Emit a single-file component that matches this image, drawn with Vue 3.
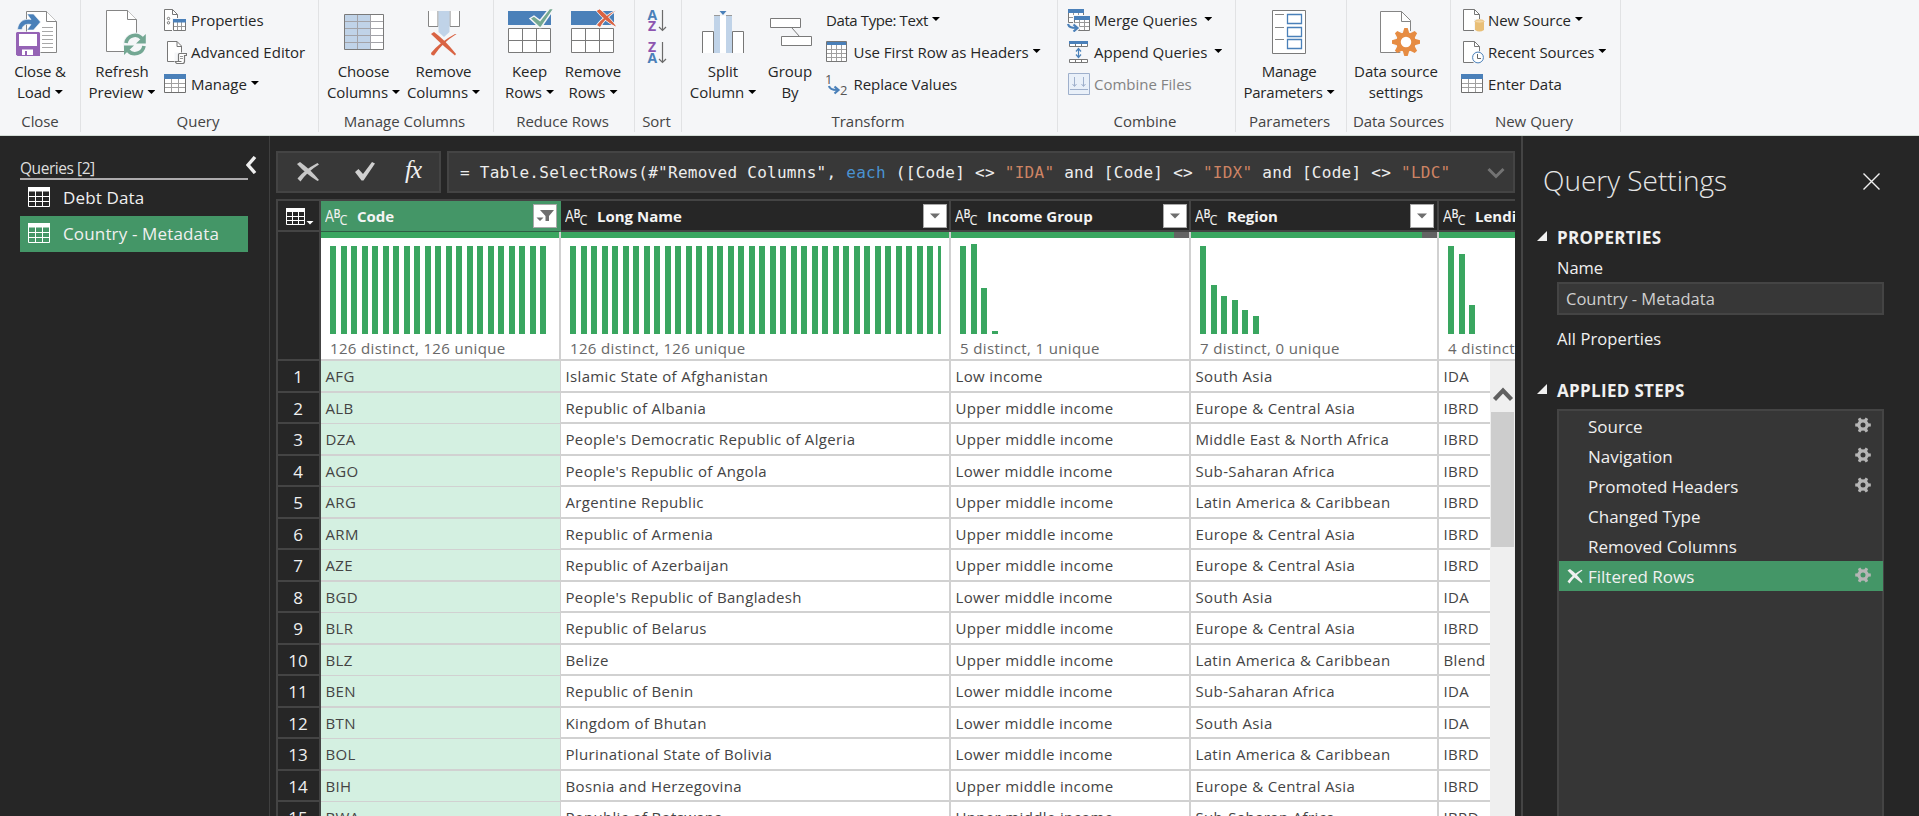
<script setup>
const queries = [
  { name: 'Debt Data', active: false },
  { name: 'Country - Metadata', active: true },
]

const formula = [
  { t: '= Table.SelectRows(#"Removed Columns", ' },
  { t: 'each', k: 'kw' },
  { t: ' ([Code] <> ' },
  { t: '"IDA"', k: 'str' },
  { t: ' and [Code] <> ' },
  { t: '"IDX"', k: 'str' },
  { t: ' and [Code] <> ' },
  { t: '"LDC"', k: 'str' },
]

const columns = [
  { key: 'code', title: 'Code', bars: Array(21).fill(88), note: '126 distinct, 126 unique', filtered: true },
  { key: 'name', title: 'Long Name', bars: Array(36).fill(88), note: '126 distinct, 126 unique' },
  { key: 'income', title: 'Income Group', bars: [88, 90, 46, 3], note: '5 distinct, 1 unique', empty: true },
  { key: 'region', title: 'Region', bars: [88, 49, 38, 34, 24, 18], note: '7 distinct, 0 unique', empty: true },
  { key: 'lending', title: 'Lending category', bars: [88, 80, 29], note: '4 distinct, 0 unique' },
]

const U = 'Upper middle income'
const L = 'Lower middle income'
const ECA = 'Europe & Central Asia'
const LAC = 'Latin America & Caribbean'
const SSA = 'Sub-Saharan Africa'
const rows = [
  ['AFG', 'Islamic State of Afghanistan', 'Low income', 'South Asia', 'IDA'],
  ['ALB', 'Republic of Albania', U, ECA, 'IBRD'],
  ['DZA', "People's Democratic Republic of Algeria", U, 'Middle East & North Africa', 'IBRD'],
  ['AGO', "People's Republic of Angola", L, SSA, 'IBRD'],
  ['ARG', 'Argentine Republic', U, LAC, 'IBRD'],
  ['ARM', 'Republic of Armenia', U, ECA, 'IBRD'],
  ['AZE', 'Republic of Azerbaijan', U, ECA, 'IBRD'],
  ['BGD', "People's Republic of Bangladesh", L, 'South Asia', 'IDA'],
  ['BLR', 'Republic of Belarus', U, ECA, 'IBRD'],
  ['BLZ', 'Belize', U, LAC, 'Blend'],
  ['BEN', 'Republic of Benin', L, SSA, 'IDA'],
  ['BTN', 'Kingdom of Bhutan', L, 'South Asia', 'IDA'],
  ['BOL', 'Plurinational State of Bolivia', L, LAC, 'IBRD'],
  ['BIH', 'Bosnia and Herzegovina', U, ECA, 'IBRD'],
  ['BWA', 'Republic of Botswana', U, SSA, 'IBRD'],
]

const steps = [
  { name: 'Source', gear: true },
  { name: 'Navigation', gear: true },
  { name: 'Promoted Headers', gear: true },
  { name: 'Changed Type' },
  { name: 'Removed Columns' },
  { name: 'Filtered Rows', gear: true, active: true },
]

const teeth = [0, 45, 90, 135, 180, 225, 270, 315]
const smallTeeth = [30, 90, 150, 210, 270, 330]
</script>

<template>
  <div class="app">
    <header class="ribbon">
      <section class="group g-close">
        <div class="body">
          <div class="big">
            <svg width="50" height="50" viewBox="15 8 50 50">
              <path d="M26.5 11.5H46.5L56.5 21.5V52.5H26.5Z" fill="#fff" stroke="#858585" />
              <path d="M46.5 11.5V21.5H56.5" fill="#fff" stroke="#858585" />
              <path d="M42 27.5H53M42 31.5H53M42 35.5H53M42 39.5H53M42 43.5H53M42 47.5H53" stroke="#a8a8a8" />
              <path d="M17.5 29.5C18.500 21.500 23.500 18.500 31 19.500L27 14H33.500L40.500 22L33.500 30H27L31 24.500C25.500 23.500 22.500 25.500 22 29.500Z" fill="#4a80b9" stroke="#f5f6f8" stroke-width=".6" />
              <path d="M17 31.500H39L40.500 33V56.500H17L15.500 55V31.500Z" fill="#f5f6f8" />
              <path d="M17 32H39L40 33V56H17.500L16 54.500V33Z" fill="#9563b5" />
              <path d="M19 34H37V46H19Z" fill="#fff" />
              <path d="M22 49.500H33V55H27V51H25V55H22Z" fill="#fff" />
            </svg>
            <span>Close &amp;</span><span>Load<i class="caret"></i></span>
          </div>
        </div>
        <div class="label">Close</div>
      </section>

      <section class="group g-query">
        <div class="body">
          <div class="big">
            <svg width="50" height="50" viewBox="97 8 50 50">
              <path d="M106.500 10.500H127.500L136.500 19.500V51.500H106.500Z" fill="#fff" stroke="#858585" />
              <path d="M127.500 10.500V19.500H136.500" fill="#fff" stroke="#858585" />
              <circle cx="135" cy="44.500" r="12" fill="#f5f6f8" />
              <g fill="none" stroke="#73a793" stroke-width="3.600">
                <path d="M126 43A9.200 9.200 0 0 1 142 38.500" />
                <path d="M144 46A9.200 9.200 0 0 1 128 50.500" />
              </g>
              <path d="M145.800 34V43.500H136Z M124 55V45.500H134Z" fill="#73a793" />
            </svg>
            <span>Refresh</span><span>Preview<i class="caret"></i></span>
          </div>
          <div class="stack">
            <div class="small">
              <svg width="24" height="24" viewBox="163 8 24 24">
                <path d="M164.500 9.500H172.500L177.500 14.500V30.500H164.500Z" fill="#fff" stroke="#777" />
                <path d="M172.500 9.500V14.500H177.500" fill="none" stroke="#777" />
                <path d="M172 18H187V32H172Z" fill="#f5f6f8" />
                <path d="M173.500 19.500H185.500V30.500H173.500Z" fill="#fff" stroke="#777" />
                <path d="M177.500 21V30M181.500 21V30M174 26.500H185" stroke="#999" />
                <path d="M173 19H186V22.500H173Z" fill="#4a80b9" />
                <circle cx="168.500" cy="18.500" r="1.200" fill="none" stroke="#777" />
                <circle cx="168.500" cy="22.800" r="1.200" fill="none" stroke="#777" />
              </svg>Properties
            </div>
            <div class="small">
              <svg width="24" height="24" viewBox="163 40 24 24">
                <path d="M167.500 41.500H177L181.500 46V61.500H167.500Z" fill="#fff" stroke="#777" />
                <path d="M177 41.500V46.500H181.500" fill="none" stroke="#777" />
                <path d="M174.500 52.500H187V64H174.500Z" fill="#f5f6f8" />
                <path d="M178.500 61V54.500Q178.500 53.500 179.500 53.500H186.500V55.500H184.500V61.500Q184.500 63.500 182.500 63.500H177Q175.500 63 175.500 61.500H181.500" fill="#fff" stroke="#777" stroke-width="1.200" />
                <path d="M180 56.500H183M180 58.500H183" stroke="#999" />
              </svg>Advanced Editor
            </div>
            <div class="small">
              <svg width="24" height="24" viewBox="163 72 24 24">
                <path d="M164.500 75.500H185.500V92.500H164.500Z" fill="#fff" stroke="#6f6f6f" />
                <path d="M171.500 79V92M178.500 79V92M165 83.500H185M165 87.500H185" stroke="#a0a0a0" />
                <path d="M164 74H186V79H164Z" fill="#4a80b9" />
              </svg>Manage<i class="caret"></i>
            </div>
          </div>
        </div>
        <div class="label">Query</div>
      </section>

      <section class="group g-cols">
        <div class="body">
          <div class="big">
            <svg width="50" height="50" viewBox="339 8 50 50">
              <path d="M344.500 14.500H383.500V49.500H344.500Z" fill="#fff" />
              <path d="M345 15H370V49H345Z" fill="#c0d3e8" />
              <path d="M357.500 15V49M370.500 15V49M345 21.500H383M345 28.500H383M345 35.500H383M345 42.500H383" stroke="#a3a3a8" />
              <path d="M344.500 14.500H383.500V49.500H344.500Z" fill="none" stroke="#7a7a7a" />
            </svg>
            <span>Choose</span><span>Columns<i class="caret"></i></span>
          </div>
          <div class="big">
            <svg width="50" height="50" viewBox="419 8 50 50">
              <path d="M428.500 11V26.500H438V11M450 11V26.500H459.500V11" fill="#fff" stroke="#858585" />
              <path d="M438.500 11H449.500V32L444 37L438.500 32Z" fill="#c0d3e8" />
              <path d="M431 34L434 32Q445 40 456 54L455 55.500Q443 46 431 34Z" fill="#d96343" />
              <path d="M456.500 34L455 34Q440 42 431 53Q431 55.500 434 55.500Q442 43 456.500 34Z" fill="#d96343" />
            </svg>
            <span>Remove</span><span>Columns<i class="caret"></i></span>
          </div>
        </div>
        <div class="label">Manage Columns</div>
      </section>

      <section class="group g-rows">
        <div class="body">
          <div class="big">
            <svg width="50" height="50" viewBox="505 8 50 50">
              <path d="M508 11H551V25H508Z" fill="#4a80b9" />
              <path d="M508.500 28.500H550.500V52.500H508.500ZM522.500 28V52M536.500 28V52M508 40.500H551" fill="#fff" stroke="#7a7a7a" />
              <path d="M530 18.500L534 16L540 20.500L549.500 8.500H554L541 27.500H539.500Z" fill="#74a890" stroke="#f5f6f8" stroke-width="1.400" />
            </svg>
            <span>Keep</span><span>Rows<i class="caret"></i></span>
          </div>
          <div class="big">
            <svg width="50" height="50" viewBox="568 8 50 50">
              <path d="M571 11H614V25H571Z" fill="#4a80b9" />
              <path d="M571.500 28.500H613.500V52.500H571.500ZM585.500 28V52M599.500 28V52M571 40.500H614" fill="#fff" stroke="#7a7a7a" />
              <g fill="#d96343" stroke="#f5f6f8" stroke-width="1.600" paint-order="stroke">
                <path d="M597 11L599.500 9.500Q608 16 616 26.500Q605 21 597 11Z" />
                <path d="M616 10.500Q603 17 597 25L600 27Q605 18 616 10.500Z" />
              </g>
              <path d="M597 11L599.500 9.500Q608 16 616 26.500Q605 21 597 11Z" fill="#d96343" />
            </svg>
            <span>Remove</span><span>Rows<i class="caret"></i></span>
          </div>
        </div>
        <div class="label">Reduce Rows</div>
      </section>

      <section class="group g-sort">
        <div class="body">
          <svg class="sort" width="46" height="60" viewBox="635 6 46 60">
            <g class="az">
              <text x="647.500" y="20">A</text>
              <text x="648" y="31" class="z">Z</text>
              <text x="648" y="51.500" class="z">Z</text>
              <text x="647.500" y="63">A</text>
            </g>
            <path d="M662.500 10V30M659 27L662.500 30.500L666 27M662.500 42V62M659 59L662.500 62.500L666 59" fill="none" stroke="#6b6b6b" stroke-width="1.200" />
          </svg>
        </div>
        <div class="label">Sort</div>
      </section>

      <section class="group g-transform">
        <div class="body">
          <div class="big">
            <svg width="50" height="50" viewBox="698 8 50 50">
              <path d="M702.500 53V31.500H713.500V53M732.500 53V31.500H743.500V53" fill="#fff" stroke="#777" />
              <path d="M720 16H726V53H720Z" fill="#fff" />
              <path d="M714 15H720V53H714ZM726 15H732V53H726Z" fill="#c0d3e8" />
              <path d="M714 15.500H720M726 15.500H732" stroke="#999" />
              <path d="M719.500 11H726.500L723 15Z" fill="#4a80b9" />
            </svg>
            <span>Split</span><span>Column<i class="caret"></i></span>
          </div>
          <div class="big">
            <svg width="50" height="50" viewBox="765 8 50 50">
              <path d="M770.500 18.500H800.500V27.500H770.500ZM781.500 36.500H811.500V45.500H781.500Z" fill="#fff" stroke="#7a7a7a" />
              <path d="M792 28L799.500 36.500" stroke="#7a7a7a" />
            </svg>
            <span>Group</span><span>By</span>
          </div>
          <div class="stack">
            <div class="small dtype">Data Type: Text<i class="caret"></i></div>
            <div class="small">
              <svg width="22" height="24" viewBox="827 40 22 24">
                <path d="M827.500 41.500H847.500V61.500H827.500Z" fill="#fff" stroke="#777" />
                <path d="M832.500 42V61M837.500 42V61M842.500 42V61M828 49.500H847M828 53.500H847M828 57.500H847" stroke="#a0a0a0" />
                <path d="M828 42H847V45H828Z" fill="#4a80b9" />
              </svg>Use First Row as Headers<i class="caret"></i>
            </div>
            <div class="small">
              <svg width="22" height="24" viewBox="827 72 22 24">
                <text class="digit" x="826" y="84">1</text>
                <text class="digit" x="841" y="95">2</text>
                <path d="M830 86Q831 90 838 90M835.500 86.500L839.500 90L835.500 93.500" fill="none" stroke="#4a80b9" stroke-width="2.200" />
              </svg>Replace Values
            </div>
          </div>
        </div>
        <div class="label">Transform</div>
      </section>

      <section class="group g-combine">
        <div class="body">
          <div class="stack">
            <div class="small">
              <svg width="24" height="24" viewBox="1067 8 24 24">
                <path d="M1068.500 9.500H1083.500V22.500H1068.500Z" fill="#fff" stroke="#777" />
                <path d="M1073.500 13V22M1078.500 13V22M1069 17.500H1083" stroke="#999" />
                <path d="M1068 9H1084V13H1068Z" fill="#4a80b9" />
                <path d="M1073 15H1091V32H1073Z" fill="#f5f6f8" />
                <path d="M1074.500 16.500H1089.500V30.500H1074.500Z" fill="#fff" stroke="#777" />
                <path d="M1079.500 20V30M1084.500 20V30M1075 22.500H1089M1075 26.500H1089" stroke="#999" />
                <path d="M1074 16H1090V20H1074Z" fill="#4a80b9" />
                <path d="M1068 24Q1069 28 1076 28M1073.500 24L1078 28L1073.500 32" fill="none" stroke="#f5f6f8" stroke-width="4" />
                <path d="M1068 24Q1069 28 1076 28M1073.500 24.500L1077.500 28L1073.500 31.500" fill="none" stroke="#4a80b9" stroke-width="2.200" />
              </svg>Merge Queries<i class="caret wide"></i>
            </div>
            <div class="small">
              <svg width="24" height="24" viewBox="1067 40 24 24">
                <path d="M1069.500 43.500H1087.500V46.500H1069.500ZM1069.500 59.500H1087.500V62.500H1069.500ZM1075.500 43V46M1081.500 43V46M1075.500 59V63M1081.500 59V63" fill="#fff" stroke="#777" />
                <path d="M1069 41H1088V44H1069Z" fill="#4a80b9" />
                <path d="M1078.500 49V57M1076 51.500L1078.500 48.500L1081 51.500M1076 54.500L1078.500 57.500L1081 54.500" fill="none" stroke="#4a80b9" stroke-width="1.200" />
              </svg>Append Queries<i class="caret wide"></i>
            </div>
            <div class="small disabled">
              <svg width="24" height="24" viewBox="1067 72 24 24">
                <path d="M1068.500 73.500H1089.500V94.500H1068.500Z" fill="#e9f0f9" stroke="#9fb0cc" />
                <path d="M1070 89.500H1088M1074.500 77V86M1083.500 77V86M1072.500 84L1074.500 86.500L1076.500 84M1081.500 84L1083.500 86.500L1085.500 84" fill="none" stroke="#9fb0cc" />
              </svg>Combine Files
            </div>
          </div>
        </div>
        <div class="label">Combine</div>
      </section>

      <section class="group g-params">
        <div class="body">
          <div class="big">
            <svg width="50" height="50" viewBox="1264 8 50 50">
              <path d="M1272.500 10.500H1305.500V53.500H1272.500Z" fill="#fff" stroke="#7a7a7a" />
              <path d="M1287.500 14.500H1301.500V23.500H1287.500ZM1287.500 27.500H1301.500V36.500H1287.500ZM1287.500 39.500H1301.500V48.500H1287.500Z" fill="none" stroke="#4a80b9" stroke-width="1.300" />
              <path d="M1275 14.500H1284M1275 27.500H1284M1275 39.500H1284" stroke="#858585" />
            </svg>
            <span>Manage</span><span>Parameters<i class="caret"></i></span>
          </div>
        </div>
        <div class="label">Parameters</div>
      </section>

      <section class="group g-sources">
        <div class="body">
          <div class="big">
            <svg width="50" height="50" viewBox="1371 8 50 50">
              <path d="M1380.500 11.500H1401.500L1410.500 20.500V52.500H1380.500Z" fill="#fff" stroke="#858585" />
              <path d="M1401.500 11.500V21.500H1410.500" fill="none" stroke="#858585" />
              <circle cx="1406" cy="42" r="12" fill="#f5f6f8" />
              <g fill="#e68c43">
                <path v-for="a in teeth" :key="a" :transform="`rotate(${a} 1406 42)`" d="M1402.500 34L1404.300 28H1407.700L1409.500 34Z" />
              </g>
              <circle cx="1406" cy="42" r="7.500" fill="#fff" stroke="#e68c43" stroke-width="4.500" />
            </svg>
            <span>Data source</span><span>settings</span>
          </div>
        </div>
        <div class="label">Data Sources</div>
      </section>

      <section class="group g-new">
        <div class="body">
          <div class="stack">
            <div class="small">
              <svg width="24" height="24" viewBox="1461 8 24 24">
                <path d="M1463.500 9.500H1474.500L1479.500 14.500V30.500H1463.500Z" fill="#fff" stroke="#777" />
                <path d="M1474.500 9.500V14.500H1479.500" fill="none" stroke="#777" />
                <path d="M1474 19H1485V32H1474Z" fill="#f5f6f8" />
                <path d="M1475 21.500V30Q1479.500 33 1484 30V21.500Z" fill="#e9bf77" />
                <ellipse cx="1479.500" cy="21.500" rx="4.500" ry="1.700" fill="#f3d6a3" stroke="#e9bf77" />
              </svg>New Source<i class="caret"></i>
            </div>
            <div class="small">
              <svg width="24" height="24" viewBox="1461 40 24 24">
                <path d="M1463.500 41.500H1474.500L1479.500 46.500V62.500H1463.500Z" fill="#fff" stroke="#777" />
                <path d="M1474.500 41.500V46.500H1479.500" fill="none" stroke="#777" />
                <circle cx="1478" cy="57.500" r="6.600" fill="#f5f6f8" />
                <circle cx="1478" cy="57.500" r="5.400" fill="#fff" stroke="#4a80b9" />
                <path d="M1477.500 54V58.500H1481" fill="none" stroke="#666" />
              </svg>Recent Sources<i class="caret"></i>
            </div>
            <div class="small">
              <svg width="24" height="24" viewBox="1461 72 24 24">
                <path d="M1461.500 75.500H1482.500V92.500H1461.500Z" fill="#fff" stroke="#6f6f6f" />
                <path d="M1468.500 79V92M1475.500 79V92M1462 83.500H1482M1462 87.500H1482" stroke="#a0a0a0" />
                <path d="M1461 74H1483V79H1461Z" fill="#4a80b9" />
              </svg>Enter Data
            </div>
          </div>
        </div>
        <div class="label">New Query</div>
      </section>
    </header>

    <div class="workspace">
      <aside class="queries">
        <div class="q-head">
          <span>Queries [2]</span>
          <svg width="12" height="18" viewBox="0 0 12 18"><path d="M9 1L2 9L9 17" fill="none" stroke="#eee" stroke-width="3.400" /></svg>
        </div>
        <div v-for="q in queries" :key="q.name" class="q-item" :class="{ active: q.active }">
          <svg width="22" height="20" viewBox="0 0 22 20">
            <path d="M.5 .5H21.500V19.500H.5ZM7.500 4V19M14.500 4V19M1 9.500H21M1 14.500H21" fill="none" stroke="#fff" />
            <path d="M0 0H22V4.500H0Z" fill="#fff" />
          </svg>
          <span>{{ q.name }}</span>
        </div>
      </aside>

      <main class="editor">
        <div class="fbar">
          <div class="fbuttons">
            <svg width="24" height="22" viewBox="296 161 24 22">
              <path d="M297 164L300 162Q311 170 319 180L317.500 181Q306 174 297 164Z" fill="#c8c8c8" />
              <path d="M319 164.500L317.500 163Q304 170 297.500 178.500L300.500 181.500Q308 171 319 164.500Z" fill="#c8c8c8" />
            </svg>
            <svg width="24" height="22" viewBox="353 161 24 22">
              <path d="M355 172L358.500 169L363 174L372 162L375 163.500L363.500 180.500H361.500Z" fill="#d0d0d0" />
            </svg>
            <span class="fx">fx</span>
          </div>
          <div class="formula">
            <code><span v-for="(p, i) in formula" :key="i" :class="p.k">{{ p.t }}</span></code>
            <svg width="18" height="13" viewBox="0 0 18 13"><path d="M1.500 2L9 9.500L16.500 2" fill="none" stroke="#737373" stroke-width="3" /></svg>
          </div>
        </div>

        <div class="grid">
          <div class="gutter">
            <div class="corner">
              <svg width="28" height="18" viewBox="0 0 28 18">
                <path d="M.5 .5H18.500V16.500H.5ZM6.500 4V16M12.500 4V16M1 8.500H18M1 12.500H18" fill="none" stroke="#fff" />
                <path d="M0 0H19V4H0Z" fill="#fff" />
                <path d="M20.500 13H27.500L24 16.500Z" fill="#fff" />
              </svg>
            </div>
            <div class="gspace"></div>
            <div v-for="(r, i) in rows" :key="i" class="gnum">{{ i + 1 }}</div>
          </div>

          <div v-for="(c, ci) in columns" :key="c.key" class="col" :class="[c.key, { filtered: c.filtered }]">
            <div class="chead">
              <svg class="abc" width="24" height="22" viewBox="0 0 24 22">
                <text x="0" y="14.500" font-size="16.500" textLength="9" lengthAdjust="spacingAndGlyphs">A</text>
                <text x="8.500" y="11" font-size="13" font-weight="600" textLength="7" lengthAdjust="spacingAndGlyphs">B</text>
                <text x="14.500" y="18" font-size="14.500" textLength="8" lengthAdjust="spacingAndGlyphs">C</text>
              </svg>
              <span class="title">{{ c.title }}</span>
              <span class="drop">
                <svg v-if="c.filtered" width="22" height="22" viewBox="0 0 22 22">
                  <path d="M6 5H20L15 11V16H11.500V11ZM2.500 12.500H9.500L6 16Z" fill="#6e6e6e" />
                </svg>
                <svg v-else width="22" height="22" viewBox="0 0 22 22"><path d="M6 8.500H16L11 13.500Z" fill="#6e6e6e" /></svg>
              </span>
            </div>
            <div class="quality"><i v-if="c.empty"></i></div>
            <div class="dist">
              <div class="bars">
                <i v-for="(h, bi) in c.bars" :key="bi" :style="{ height: h + 'px' }"></i>
              </div>
              <p>{{ c.note }}</p>
            </div>
            <div v-for="(r, i) in rows" :key="i" class="cell">{{ r[ci] }}</div>
          </div>

          <div class="scroll">
            <svg width="25" height="51" viewBox="0 0 25 51"><path d="M4.500 38.500L13 29.500L21.500 38.500" fill="none" stroke="#606060" stroke-width="4.200" /></svg>
            <div class="thumb"></div>
          </div>
        </div>
      </main>

      <aside class="settings">
        <div class="s-head">
          <h1>Query Settings</h1>
          <svg width="17" height="17" viewBox="0 0 17 17"><path d="M.5 .5L16.500 16.500M16.500 .5L.5 16.500" stroke="#f0f0f0" stroke-width="1.400" /></svg>
        </div>
        <h2 class="props"><i></i>PROPERTIES</h2>
        <div class="field">Name</div>
        <div class="input">Country - Metadata</div>
        <div class="all">All Properties</div>
        <h2><i></i>APPLIED STEPS</h2>
        <div class="steps">
          <div v-for="s in steps" :key="s.name" class="step" :class="{ active: s.active }">
            <span class="del">
              <svg v-if="s.active" width="16" height="15" viewBox="0 0 16 15">
                <path d="M.5 1.500L3 0Q10 5 15.500 13L14.500 14Q7 9 .5 1.500Z" fill="#f0f0f0" />
                <path d="M15.500 1.500L14.500 .8Q5 6 .5 12.500L2.500 14.500Q8 6.500 15.500 1.500Z" fill="#f0f0f0" />
              </svg>
            </span>
            <span>{{ s.name }}</span>
            <svg v-if="s.gear" class="gear" width="16" height="16" viewBox="-8 -8 16 16">
              <path v-for="a in smallTeeth" :key="a" :transform="`rotate(${a})`" d="M-1.800 -4L-1.400 -7.800H1.400L1.800 -4Z" fill="#b5b5b5" />
              <circle r="4.100" fill="none" stroke="#b5b5b5" stroke-width="3.200" />
            </svg>
          </div>
        </div>
      </aside>
    </div>
  </div>
</template>

<style>
body {
  margin: 0;
  overflow: hidden;
}
</style>

<style scoped>
.app {
  display: flex;
  flex-direction: column;
  width: 1919px;
  height: 816px;
  overflow: hidden;
  background: #262626;
  font-family: "Open Sans", "Noto Sans", sans-serif;
  font-size: 15px;
}
.app * {
  box-sizing: border-box;
}
svg {
  display: block;
  flex: none;
}

/* Ribbon */
.ribbon {
  display: flex;
  flex: none;
  height: 136px;
  background: #f5f6f8;
  border-bottom: 1px solid #d3dcd6;
  color: #262626;
  white-space: nowrap;
}
.group {
  display: flex;
  flex-direction: column;
  flex: none;
  height: 132px;
  border-right: 1px solid #e1e2e4;
}
.g-close { width: 81px; }
.g-query { width: 238px; }
.g-cols { width: 175px; }
.g-rows { width: 141px; }
.g-sort { width: 47px; }
.g-transform { width: 376px; }
.g-combine { width: 178px; }
.g-params { width: 111px; }
.g-sources { width: 104px; }
.g-new { width: 170px; }
.body {
  display: flex;
  height: 111px;
}
.label {
  height: 21px;
  padding-right: 3px;
  line-height: 21px;
  text-align: center;
  color: #444;
}
.g-close .label,
.g-sources .label {
  padding-right: 0;
  letter-spacing: -0.1px;
}
.big {
  display: flex;
  flex-direction: column;
  align-items: center;
  flex: none;
  padding-top: 8px;
  line-height: 21px;
}
.big svg {
  margin-bottom: 3px;
}
.g-close .big { width: 80px; letter-spacing: -0.15px; }
.g-query .big { width: 82px; }
.g-cols .big { width: 89px; letter-spacing: -0.1px; }
.g-cols .big + .big { width: 71px; }
.g-rows .big { width: 71px; }
.g-rows .big + .big { width: 56px; }
.g-transform .big { width: 82px; }
.g-transform .big + .big { width: 52px; }
.g-params .big { width: 106px; letter-spacing: -0.2px; }
.g-sources .big { width: 98px; }
.caret {
  display: inline-block;
  width: 8px;
  height: 4px;
  margin-left: 4px;
  background: #000;
  clip-path: polygon(0 0, 100% 0, 50% 100%);
  vertical-align: 4px;
}
.small .caret {
  margin-bottom: 2px;
}
.small .caret.wide {
  margin-left: 7px;
}
.stack {
  padding-top: 4px;
}
.g-transform .stack { padding-left: 10px; }
.g-combine .stack { padding-left: 9px; }
.g-new .stack { padding-left: 10px; letter-spacing: -0.05px; }
.small {
  display: flex;
  align-items: center;
  height: 32px;
}
.small svg {
  margin-right: 4px;
}
.g-combine .small svg,
.g-new .small svg {
  margin-right: 3px;
}
.g-transform .small {
  letter-spacing: -0.05px;
}
.g-transform .small svg {
  margin-right: 5.500px;
}
.g-transform .dtype {
  letter-spacing: -0.4px;
}
.disabled {
  color: #838383;
}
.sort {
  margin-top: 6px;
}
.az text {
  font: 700 14px "Open Sans", sans-serif;
  fill: #4a80b9;
}
.az .z {
  fill: #8d55b0;
}
.digit {
  font: 13px "Open Sans", sans-serif;
  fill: #555;
}

/* Workspace */
.workspace {
  display: flex;
  flex: 1;
  min-height: 0;
}
.queries {
  flex: none;
  width: 270px;
  padding: 18px 0 0 20px;
  border-right: 1px solid #3f3f3f;
  color: #f0f0f0;
}
.q-head {
  display: flex;
  justify-content: space-between;
  width: 238px;
  height: 26px;
  line-height: 28px;
  font-size: 15.500px;
  letter-spacing: -0.45px;
  color: #dedede;
  background: linear-gradient(#adabad, #adabad) 0 100% / 228px 2px no-repeat;
}
.q-head svg {
  margin-top: 2px;
}
.q-item {
  display: flex;
  align-items: center;
  gap: 13px;
  width: 228px;
  height: 36px;
  padding-left: 8px;
  font-size: 17px;
  letter-spacing: 0.150px;
  line-height: 36px;
}
.q-item svg {
  margin-top: -2px;
}
.q-item.active {
  background: #449667;
}

.editor {
  flex: none;
  width: 1245px;
  padding: 15px 0 0 6px;
}
.fbar {
  display: flex;
  gap: 6px;
  height: 42px;
}
.fbuttons {
  display: flex;
  width: 165px;
  padding: 8px 0 0 18px;
  background: #383838;
  border: 2px solid #444;
}
.fbuttons svg + svg {
  margin-left: 33px;
}
.fx {
  margin: -5px 0 0 28px;
  font: italic 25px/28px "Liberation Serif", serif;
  letter-spacing: -1px;
  color: #f0f0f0;
}
.formula {
  display: flex;
  justify-content: space-between;
  width: 1068px;
  padding: 0 8px 0 11px;
  background: #383838;
  border: 2px solid #444;
}
.formula svg {
  margin-top: 14px;
}
code {
  font: 16px/38px "DejaVu Sans Mono", monospace;
  letter-spacing: 0.272px;
  white-space: pre;
  color: #ededed;
  padding-top: 1px;
}
.kw { color: #4a92d0; }
.str { color: #ce8464; }

.grid {
  position: relative;
  display: flex;
  width: 1239px;
  height: 617px;
  margin-top: 6px;
  overflow: hidden;
  border-top: 2px solid #444;
  border-left: 2px solid #444;
}
.gutter {
  flex: none;
  width: 43px;
  border-right: 2px solid #444;
  color: #f0f0f0;
  font-size: 17px;
  text-align: center;
}
.corner {
  height: 31px;
  padding: 7px 0 0 8px;
  border-bottom: 2px solid #444;
}
.gspace {
  height: 129px;
  border-bottom: 2px solid #444;
}
.gnum {
  height: 32px;
  line-height: 31px;
  padding-right: 1px;
  border-bottom: 2px solid #444;
}
.gnum:nth-child(even) {
  height: 31px;
}
.col {
  flex: none;
  background: #fff;
}
.code, .income { width: 240px; }
.name { width: 390px; }
.region { width: 248px; }
.lending { width: 240px; }
.chead {
  display: flex;
  height: 31px;
  padding: 3px 2px 0 4px;
  background: #262626;
  border-right: 2px solid #444;
  border-bottom: 2px solid #444;
  color: #f4f4f4;
}
.region .chead {
  padding-right: 3px;
}
.filtered .chead {
  background: #449667;
  border-right-color: #449667;
  border-bottom: 1px solid #2f5f44;
}
.abc {
  margin-top: 3px;
  fill: #f0f0f0;
  font-family: "Open Sans", sans-serif;
}
.title {
  margin-left: 8px;
  line-height: 25px;
  font-weight: 700;
}
.drop {
  width: 24px;
  height: 24px;
  margin-left: auto;
  background: #fff;
  border: 1px solid #a9a9a9;
}
.quality {
  display: flex;
  justify-content: flex-end;
  height: 6px;
  background: #3aa660;
  border-right: 2px solid #d1d1d1;
}
.quality i {
  width: 15px;
  background: #636363;
}
.dist {
  height: 123px;
  padding: 6px 7px 0 9px;
  border-right: 2px solid #d1d1d1;
  border-bottom: 2px solid #d1d1d1;
}
.bars {
  display: flex;
  align-items: flex-end;
  gap: 4.500px;
  height: 90px;
  overflow: hidden;
}
.bars i {
  flex: none;
  width: 6px;
  background: #3aa660;
}
.name .bars {
  width: 371px;
}
.dist p {
  margin: 4px 0 0;
  line-height: 21px;
  letter-spacing: 0.360px;
  color: #686868;
  white-space: nowrap;
}
.cell {
  height: 32px;
  padding-left: 4.500px;
  line-height: 31px;
  letter-spacing: 0.350px;
  color: #444;
  white-space: nowrap;
  overflow: hidden;
  border-right: 2px solid #d1d1d1;
  border-bottom: 2px solid #d1d1d1;
}
.cell:nth-child(odd) {
  height: 31px;
}
.code .cell {
  background: #d4f0e1;
  border-right-width: 1px;
}
.code .cell:nth-child(odd) {
  border-bottom-width: 1px;
}
.scroll {
  position: absolute;
  top: 160px;
  right: 0;
  bottom: 0;
  width: 25px;
  background: #efefef;
}
.thumb {
  width: 23px;
  height: 135px;
  margin-left: 1px;
  background: #cdcdcd;
}

/* Query settings */
.settings {
  display: flex;
  flex-direction: column;
  flex: none;
  width: 398px;
  margin-left: 6px;
  padding: 24px 35px 0 34px;
  border-left: 2px solid #444;
  color: #f0f0f0;
  font-size: 17px;
}
.s-head {
  display: flex;
  justify-content: space-between;
  height: 60px;
  margin-left: -14px;
  padding-right: 4px;
}
.s-head svg {
  margin-top: 13px;
}
h1 {
  margin: 0;
  font-size: 28px;
  font-weight: 300;
  line-height: 40px;
  color: #e6e6e6;
}
h2 {
  display: flex;
  margin: 0 0 0 -20px;
  font-size: 17px;
  font-weight: 700;
  letter-spacing: 0.320px;
  line-height: 35px;
  height: 34px;
}
h2 i {
  width: 10px;
  height: 10px;
  margin: 11px 10px 0 0;
  background: #f0f0f0;
  clip-path: polygon(100% 0, 100% 100%, 0 100%);
}
.field {
  height: 28px;
  line-height: 28px;
  font-size: 16.500px;
}
.input {
  width: 327px;
  height: 33px;
  padding-left: 7px;
  border: 2px solid #444;
  background: #373737;
  color: #cfcfcf;
  font-size: 16.500px;
  line-height: 30px;
}
.all {
  height: 50px;
  margin-top: 8px;
  line-height: 32px;
  font-size: 16.500px;
  letter-spacing: 0.100px;
}
.steps {
  flex: 1;
  width: 327px;
  margin-top: 2px;
  border: 2px solid #444;
  border-bottom: 0;
  background: #363636;
}
.step {
  display: flex;
  height: 30px;
  line-height: 32px;
}
.step.active {
  width: 324px;
  background: #449667;
}
.del {
  width: 29px;
  padding: 8px 0 0 8px;
}
.gear {
  margin: 6px 12px 0 auto;
}
.step:not(.active) .gear {
  margin-right: 11px;
}
</style>
